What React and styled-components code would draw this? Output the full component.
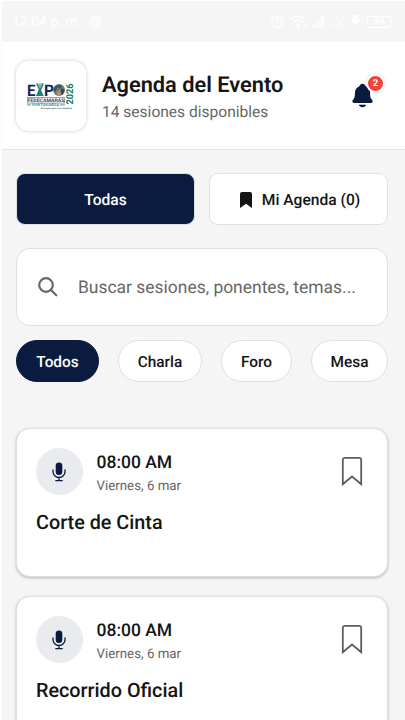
import React from 'react'
import styled, { createGlobalStyle } from 'styled-components'
import { IoNotifications } from 'react-icons/io5'

const sessions = [
    { id: 1, time: '08:00 AM', date: 'Viernes, 6 mar', title: 'Corte de Cinta' },
    { id: 2, time: '08:00 AM', date: 'Viernes, 6 mar', title: 'Recorrido Oficial' },
]

const filters = [
    { label: 'Todos', width: 83, active: true },
    { label: 'Charla', width: 84 },
    { label: 'Foro', width: 71 },
    { label: 'Mesa', width: 77 },
]

function StatusBar() {
    return (
        <StatusBarStyled>
            <span className='clock'>12:04 p. m.</span>
            <svg width="12" height="12" viewBox="0 0 12 12" fill="none" stroke="currentColor" strokeWidth="1.3">
                <rect x="1" y="1" width="10" height="10" rx="3" />
                <circle cx="6" cy="6" r="2.4" />
                <circle cx="8.9" cy="3.1" r=".3" />
            </svg>
            <div className='indicators'>
                <svg width="14" height="14" viewBox="0 0 14 14" fill="none" stroke="currentColor" strokeWidth="1.2">
                    <circle cx="7" cy="7.5" r="5.3" />
                    <path d="M7 4.5v3.2l2 1.2M1 3l2.4-2M13 3l-2.4-2" />
                </svg>
                <svg width="17" height="14" viewBox="0 0 17 14" fill="none" stroke="currentColor" strokeWidth="1.5">
                    <path d="M.8 4.6C5 .4 11.5 .4 15.5 4.6M3.2 7.4C6.2 4.6 10 4.6 13 7.4M5.7 10C7.3 8.7 9 8.7 10.6 10" />
                    <circle cx="8.1" cy="12" r=".7" fill="currentColor" />
                    <path d="M14 9v4M16 9v4" strokeWidth="1" />
                </svg>
                <svg width="11" height="13" viewBox="0 0 11 13" fill="currentColor">
                    <path d="M0 10h1.8v3H0zM3 8h1.8v5H3zM6 5h1.8v8H6zM9 1h1.8v12H9z" />
                </svg>
                <span className='speed'>11.5<br />K/S</span>
                <svg width="10" height="13" viewBox="0 0 10 13" fill="currentColor">
                    <path d="M3 0h5L6 4h4L3 12l1-5H0z" />
                </svg>
                <span className='battery'>98</span>
            </div>
        </StatusBarStyled>
    )
}

function ExpoLogo() {
    return (
        <LogoBox>
            <svg width="48" height="28" viewBox="0 0 48 28">
                <g fontFamily="Roboto, sans-serif" fontWeight="700">
                    <text x="0" y="14" fontSize="16" fill="#16275c" textLength="8.5" lengthAdjust="spacingAndGlyphs">E</text>
                    <text x="17" y="14" fontSize="16" fill="#16275c" textLength="10" lengthAdjust="spacingAndGlyphs">P</text>
                    <text x="0.5" y="20.2" fontSize="4.8" fill="#3f4a60" textLength="37" lengthAdjust="spacingAndGlyphs">FEDECAMARAS</text>
                    <text x="5" y="24.2" fontSize="3.4" fill="#28948c" textLength="27" lengthAdjust="spacingAndGlyphs">PORTUGUESA</text>
                    <text x="14" y="27.3" fontSize="2.2" fill="#526070" textLength="31" lengthAdjust="spacingAndGlyphs">Energía que nos impulsa</text>
                    <text transform="translate(46 22.5) rotate(-90)" fontSize="9.5" fill="#08796d" textLength="21" lengthAdjust="spacingAndGlyphs">2026</text>
                </g>
                <path d="M9 1.5h2.2L16.7 14H9.5L12 8z" fill="#18877e" />
                <path d="M14.5 1.5H17L11.5 14H9z" fill="#237a86" />
                <path d="M10.5 1.5h5L13 7z" fill="#9ab5b1" />
                <circle cx="32" cy="8" r="6" fill="#777c73" />
                <path d="M26.5 8c1-5 6-6 9-4l-3 3-2-2-2 5z" fill="#2b5962" />
                <path d="M29.5 10l4-2 1 3-3 3z" fill="#c49164" />
                <path d="M34.5 6l3 2-2 5-2-3z" fill="#26465b" />
                <path d="M0 15.5h37.5M0 21.1h37.5M.3 15.5v5.6M37.5 15.5v5.6" stroke="#53636e" strokeWidth=".6" />
                <path d="M0 22.9h4M33 22.9h5" stroke="#28948c" strokeWidth=".9" />
            </svg>
        </LogoBox>
    )
}

function SessionCard({ session }) {
    return (
        <CardStyled>
            <div className='card-top'>
                <div className='mic'>
                    <svg width="14" height="20" viewBox="0 0 14 20">
                        <rect x="3.7" y=".5" width="6.6" height="12.5" rx="3.3" fill="#0b1b3f" />
                        <path d="M1 8v1.7a6 5.8 0 0 0 12 0V8M7 15.5v3M3.8 18.7h6.4" fill="none" stroke="#0b1b3f" strokeWidth="1.3" strokeLinecap="round" />
                    </svg>
                </div>
                <div className='schedule'>
                    <p className='time'>{session.time}</p>
                    <p className='date'>{session.date}</p>
                </div>
                <svg className='save' width="22" height="30" viewBox="0 0 22 30">
                    <path d="M4 1.8h14a2.2 2.2 0 0 1 2.2 2.2v24.2L11 20.5l-9.2 7.7V4A2.2 2.2 0 0 1 4 1.8z" fill="none" stroke="#5c5c5c" strokeWidth="1.8" />
                </svg>
            </div>
            <h2>{session.title}</h2>
        </CardStyled>
    )
}

function App() {
    return (
        <Screen>
            <GlobalStyle />
            <StatusBar />
            <Header>
                <ExpoLogo />
                <div className='heading'>
                    <h1>Agenda del Evento</h1>
                    <p>14 sesiones disponibles</p>
                </div>
                <BellButton>
                    <IoNotifications size={27} />
                    <span className='badge'>2</span>
                </BellButton>
            </Header>
            <Content>
                <Tabs>
                    <TabButton $active>Todas</TabButton>
                    <TabButton>
                        <svg width="12" height="17" viewBox="0 0 12 17">
                            <path d="M2 0h8a2 2 0 0 1 2 2v14l-6-4.3L0 16V2a2 2 0 0 1 2-2z" fill="#151515" />
                        </svg>
                        <span>Mi Agenda (0)</span>
                    </TabButton>
                </Tabs>
                <SearchBox>
                    <svg width="20" height="20" viewBox="0 0 20 20" fill="none" stroke="#666" strokeWidth="2.2">
                        <circle cx="8" cy="8" r="6.8" />
                        <path d="M13 13l5.3 5.3" strokeLinecap="round" />
                    </svg>
                    <span>Buscar sesiones, ponentes, temas...</span>
                </SearchBox>
                <Filters>
                    {filters.map((filter) => (
                        <Chip key={filter.label} $active={filter.active} $width={filter.width}>{filter.label}</Chip>
                    ))}
                </Filters>
                <SessionList>
                    {sessions.map((session) => (
                        <SessionCard key={session.id} session={session} />
                    ))}
                </SessionList>
            </Content>
        </Screen>
    )
}

const GlobalStyle = createGlobalStyle`
    * {
        box-sizing: border-box;
    }
    body {
        margin: 0;
        background: #f5f5f5;
        font-family: Roboto, sans-serif;
        text-rendering: geometricPrecision;
        overflow: hidden;
    }
    h1, h2, p {
        margin: 0;
    }
    button {
        font-family: inherit;
        text-rendering: inherit;
        padding: 0;
    }
    svg {
        display: block;
        flex-shrink: 0;
    }
`;

const Screen = styled.div`
    width: 405px;
    height: 720px;
    overflow: hidden;
    background: #f5f5f5;
    border-left: 2px solid #fdfdfd;
    border-top: 1px solid #fdfdfd;
`;

const StatusBarStyled = styled.div`
    height: 41px;
    display: flex;
    align-items: center;
    padding: 0 13px 0 10px;
    color: #fff;
    .clock{
        width: 77px;
        font-size: 14px;
        white-space: nowrap;
    }
    .indicators{
        margin-left: auto;
        display: flex;
        align-items: center;
        gap: 6px;
    }
    .speed{
        width: 15px;
        font-size: 7px;
        line-height: 7px;
        text-align: center;
    }
    .battery{
        width: 25px;
        height: 12px;
        border: 1px solid #fff;
        border-radius: 3px;
        font-size: 9px;
        font-weight: 700;
        line-height: 10px;
        text-align: center;
    }
`;

const Header = styled.header`
    height: 108px;
    display: flex;
    align-items: center;
    padding: 0 17px 0 14px;
    background: #fff;
    border-bottom: 1px solid #e4e4e4;
    .heading{
        flex: 1;
        padding: 4px 0 0 16px;
    }
    h1{
        font-size: 21.8px;
        font-weight: 600;
        line-height: 28px;
        color: #151515;
        white-space: nowrap;
    }
    p{
        margin-top: 1px;
        font-size: 15.55px;
        line-height: 22px;
        color: #666;
        white-space: nowrap;
    }
`;

const LogoBox = styled.div`
    width: 70px;
    height: 70px;
    display: flex;
    align-items: center;
    justify-content: center;
    border-radius: 13px;
    background: #fff;
    box-shadow: 0 0 4px rgba(0, 0, 0, 0.2);
`;

const BellButton = styled.div`
    position: relative;
    width: 52px;
    height: 52px;
    display: flex;
    align-items: center;
    justify-content: center;
    color: #0b1b3f;
    .badge{
        position: absolute;
        top: 4px;
        right: 3px;
        width: 19px;
        height: 19px;
        border: 2px solid #fff;
        border-radius: 50%;
        background: #f04438;
        box-shadow: 0 0 2px rgba(0, 0, 0, 0.2);
        color: #fff;
        font-size: 9.5px;
        font-weight: 700;
        line-height: 15px;
        text-align: center;
    }
`;

const Content = styled.main`
    padding: 23px 17px 0 14px;
`;

const Tabs = styled.div`
    display: flex;
    gap: 14px;
`;

const TabButton = styled.button`
    flex: 1;
    height: 52px;
    display: flex;
    align-items: center;
    justify-content: center;
    gap: 10px;
    padding-top: 2px;
    border: 1px solid #e0e0e0;
    border-radius: 9px;
    background: ${(props) => (props.$active ? '#0b1b3f' : '#fff')};
    color: ${(props) => (props.$active ? '#fff' : '#151515')};
    font-size: 15.6px;
    font-weight: 500;
    svg{
        margin-left: 3px;
    }
`;

const SearchBox = styled.div`
    height: 78px;
    margin-top: 23px;
    display: flex;
    align-items: center;
    gap: 20px;
    padding-left: 21px;
    border: 1px solid #e0e0e0;
    border-radius: 14px;
    background: #fff;
    color: #666;
    font-size: 17.45px;
    white-space: nowrap;
    span{
        padding-top: 2px;
    }
`;

const Filters = styled.div`
    display: flex;
    justify-content: space-between;
    margin-top: 14px;
`;

const Chip = styled.button`
    width: ${(props) => props.$width}px;
    height: 42px;
    padding-top: 1px;
    border: 1px solid ${(props) => (props.$active ? '#0b1b3f' : '#e0e0e0')};
    border-radius: 21px;
    background: ${(props) => (props.$active ? '#0b1b3f' : '#fff')};
    color: ${(props) => (props.$active ? '#fff' : '#151515')};
    font-size: 15.4px;
    font-weight: 500;
`;

const SessionList = styled.div`
    display: flex;
    flex-direction: column;
    gap: 19px;
    margin-top: 46px;
`;

const CardStyled = styled.article`
    height: 149px;
    padding: 19px 24px 0 19px;
    border: 1px solid #e0e0e0;
    border-radius: 14px;
    background: #fff;
    box-shadow: 0 1px 3px rgba(0, 0, 0, 0.25);
    .card-top{
        display: flex;
    }
    .mic{
        width: 47px;
        height: 47px;
        display: flex;
        align-items: center;
        justify-content: center;
        padding-right: 1px;
        border-radius: 50%;
        background: #e9ebee;
    }
    .schedule{
        flex: 1;
        padding: 4px 0 0 13.5px;
        white-space: nowrap;
    }
    .time{
        font-size: 17.5px;
        font-weight: 500;
        line-height: 22px;
        color: #151515;
    }
    .date{
        margin-top: 3px;
        font-size: 13.3px;
        line-height: 20px;
        color: #666;
    }
    .save{
        margin-top: 8px;
    }
    h2{
        margin-top: 12px;
        font-size: 19.8px;
        font-weight: 500;
        line-height: 28px;
        color: #151515;
        white-space: nowrap;
    }
`;

export default App
